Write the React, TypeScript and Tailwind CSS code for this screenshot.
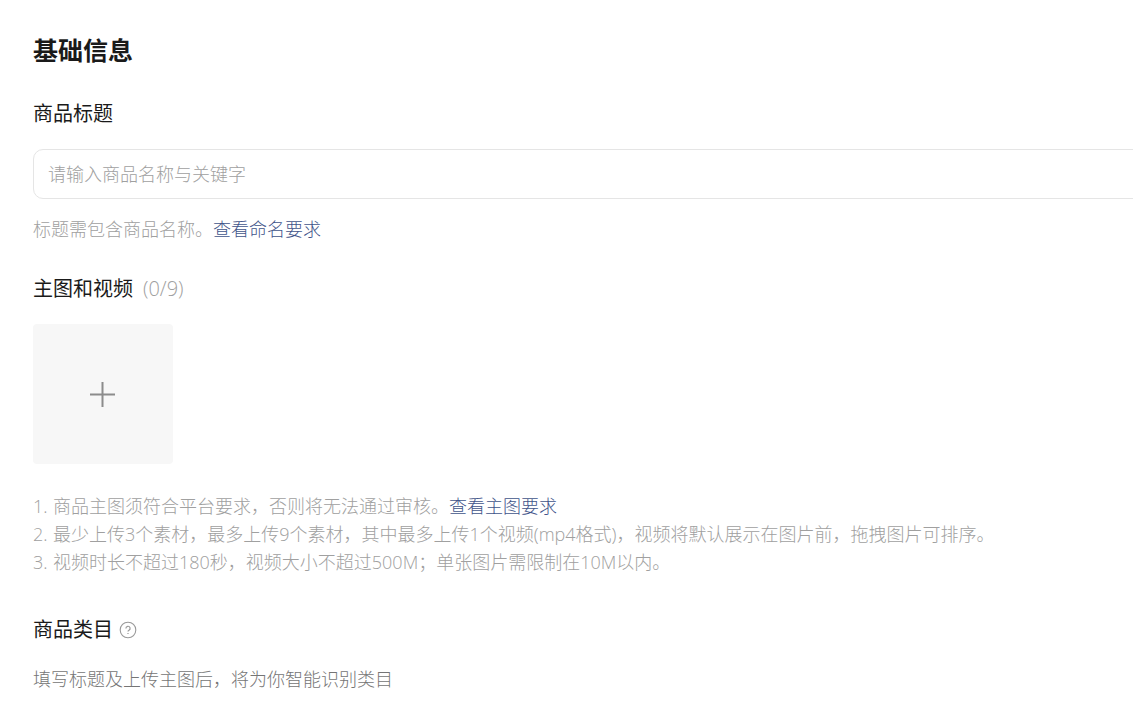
import React from "react";

const notes = [
  { text: "商品主图须符合平台要求，否则将无法通过审核。", link: "查看主图要求" },
  { text: "最少上传3个素材，最多上传9个素材，其中最多上传1个视频(mp4格式)，视频将默认展示在图片前，拖拽图片可排序。" },
  { text: "视频时长不超过180秒，视频大小不超过500M；单张图片需限制在10M以内。" },
];

export default function App() {
  return (
    <main className="min-h-screen overflow-x-hidden bg-white pt-8 pb-8 pl-[33px] font-['Open_Sans','Noto_Sans_CJK_SC',sans-serif] text-lg font-light text-[#a0a0a0]">
      <h1 className="text-[25px] leading-9 font-bold text-[#1a1a1a]">基础信息</h1>

      <section className="mt-8">
        <label htmlFor="title" className="block text-xl leading-7 font-normal text-[#1a1a1a]">商品标题</label>
        <div className="mt-[21px] -mr-4">
          <input
            id="title"
            type="text"
            placeholder="请输入商品名称与关键字"
            className="block h-[50px] w-full rounded-[10px] border border-[#e5e5e5] px-[14px] text-lg text-[#1a1a1a] outline-none placeholder:text-[#a0a0a0]"
          />
        </div>
        <p className="mt-4 leading-7">
          标题需包含商品名称。<a href="#naming" className="text-[#3f548a]">查看命名要求</a>
        </p>
      </section>

      <section className="mt-8">
        <h2 className="text-xl leading-7 font-normal text-[#1a1a1a]">
          主图和视频<span className="ml-2.5 font-light text-[#a0a0a0]">(0/9)</span>
        </h2>
        <button type="button" aria-label="上传素材" className="mt-[21px] flex size-[140px] items-center justify-center rounded bg-[#f7f7f7] text-[#8c8c8c]">
          <svg width="26" height="26" viewBox="0 0 26 26" fill="none" stroke="currentColor" strokeWidth="2" aria-hidden="true">
            <path d="M12.5 1V26M0 13.5H25" />
          </svg>
        </button>
        <ol className="mt-7">
          {notes.map((note, i) => (
            <li key={note.text} className="flex leading-7">
              <span className="w-5 shrink-0">{i + 1}.</span>
              <span>
                {note.text}
                {note.link && <a href="#images" className="text-[#3f548a]">{note.link}</a>}
              </span>
            </li>
          ))}
        </ol>
      </section>

      <section className="mt-10">
        <h2 className="flex items-center gap-1.5 text-xl leading-7 font-normal text-[#1a1a1a]">
          商品类目
          <button type="button" aria-label="类目说明" className="text-[#999999]">
            <svg width="18" height="18" viewBox="0 0 18 18" fill="none" stroke="currentColor" aria-hidden="true">
              <circle cx="9" cy="9" r="7.8" strokeWidth="1.1" />
              <path strokeWidth="1.2" d="M6.900 7.400a2.100 2.100 0 1 1 3.100 1.800C9.300 9.600 9 9.900 9 10.600M9 11.900v1.200" />
            </svg>
          </button>
        </h2>
        <p className="mt-[21px] leading-7 text-[#757575]">填写标题及上传主图后，将为你智能识别类目</p>
      </section>
    </main>
  );
}
